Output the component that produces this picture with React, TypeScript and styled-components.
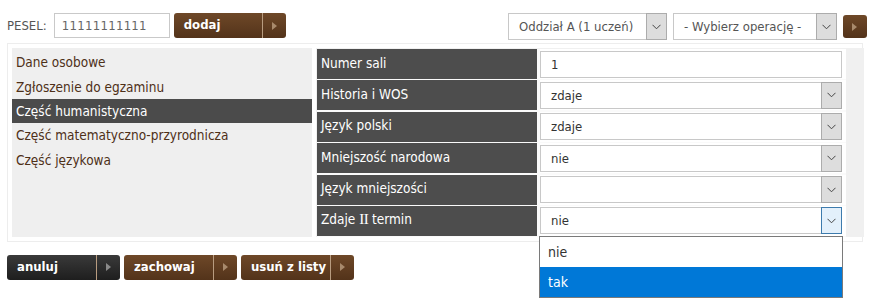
import React from 'react'
import styled, { createGlobalStyle, css } from 'styled-components'

const GlobalStyle = createGlobalStyle`
  html, body {
    margin: 0;
    padding: 0;
    background: #ffffff;
  }
  body {
    font-family: 'DejaVu Sans Condensed', 'DejaVu Sans', sans-serif;
    font-size: 13px;
    color: #444;
  }
`

const Page = styled.div`
  width: 881px;
  height: 300px;
  overflow: hidden;
  padding: 13px 14px 0 7px;
  box-sizing: border-box;
`

const TopBar = styled.div`
  display: flex;
  justify-content: space-between;
  align-items: flex-start;
  height: 30px;
`

const Group = styled.div<{ $gap?: number }>`
  display: flex;
  align-items: center;
  gap: ${p => p.$gap ?? 4}px;
`

const Label = styled.span`
  color: #555;
  font-size: 13px;
  margin-right: 3px;
`

const TextInput = styled.div<{ $width: number }>`
  width: ${p => p.$width}px;
  height: 25px;
  box-sizing: border-box;
  border: 1px solid #c9c9c9;
  background: #fff;
  color: #666;
  padding: 0 7px;
  display: flex;
  align-items: center;
  font-size: 13px;
  letter-spacing: 0.3px;
`

const btnColors = {
  brown: css`
    background: linear-gradient(#6e4828, #53331a);
  `,
  dark: css`
    background: linear-gradient(#3a3a3a, #1e1e1e);
  `,
}

const Btn = styled.div<{ $tone: 'brown' | 'dark'; $width: number; $height?: number }>`
  ${p => btnColors[p.$tone]}
  width: ${p => p.$width}px;
  height: ${p => p.$height ?? 25}px;
  border-radius: 3px;
  display: flex;
  align-items: stretch;
  color: #fff;
  font-weight: bold;
  font-size: 13px;
  box-sizing: border-box;
  cursor: pointer;
`

const BtnText = styled.span`
  flex: 1;
  display: flex;
  align-items: center;
  padding-left: 10px;
  padding-bottom: 2px;
`

const BtnArrow = styled.span<{ $solo?: boolean }>`
  width: 23px;
  display: flex;
  align-items: center;
  justify-content: center;
  border-left: ${p => (p.$solo ? 'none' : '1px solid #b89c80')};
`

const Arrow = ({ color = '#a88a6c' }: { color?: string }) => (
  <svg width="5" height="8" viewBox="0 0 5 8">
    <polygon points="0,0 5,4 0,8" fill={color} />
  </svg>
)

const Chevron = () => (
  <svg width="9" height="6" viewBox="0 0 9 6">
    <polyline points="0.5,0.8 4.5,4.8 8.5,0.8" fill="none" stroke="#444" strokeWidth="1" />
  </svg>
)

const SelectBox = styled.div<{ $width: number; $tone?: string }>`
  width: ${p => p.$width}px;
  height: 27px;
  box-sizing: border-box;
  border: 1px solid #c8c8c8;
  background: #fff;
  display: flex;
  align-items: stretch;
  color: ${p => p.$tone ?? '#333'};
  font-size: 13px;
`

const SelectText = styled.span`
  flex: 1;
  display: flex;
  align-items: center;
  padding-left: 10px;
  white-space: nowrap;
  overflow: hidden;
`

const SelectArrow = styled.span<{ $focused?: boolean }>`
  width: 21px;
  margin: -1px -1px -1px 0;
  box-sizing: border-box;
  display: flex;
  align-items: center;
  justify-content: center;
  background: ${p => (p.$focused ? '#e3f0fb' : '#dddddd')};
  border: 1px solid ${p => (p.$focused ? '#3d7bad' : '#acacac')};
`

const Panel = styled.div`
  width: 856px;
  box-sizing: border-box;
  border: 1px solid #ededed;
  padding: 4px;
  display: grid;
  grid-template-columns: 300px 1fr;
  column-gap: 4px;
`

const Sidebar = styled.div`
  background: #efefef;
  padding-top: 2px;
`

const NavItem = styled.div<{ $active?: boolean }>`
  height: 24.4px;
  display: flex;
  align-items: center;
  padding-left: 4px;
  color: ${p => (p.$active ? '#ffffff' : '#4e3018')};
  background: ${p => (p.$active ? '#4b4b4b' : 'transparent')};
  font-size: 13.5px;
`

const FormArea = styled.div`
  background: #f0f0f0;
  padding: 1px 18px 0 1px;
`

const FormGrid = styled.div`
  display: grid;
  grid-template-columns: 220px 306px;
  grid-auto-rows: 30px;
  row-gap: 1.4px;
  column-gap: 3px;
  background: #fafafa;
  padding-bottom: 1px;
`

const FieldLabel = styled.div`
  background: #4d4d4d;
  color: #fff;
  display: flex;
  align-items: center;
  padding-left: 4px;
  padding-bottom: 3px;
  font-size: 13.5px;
  white-space: pre;
`

const Roman = styled.span`
  font-family: 'Liberation Serif', serif;
  font-size: 15px;
  letter-spacing: -0.5px;
`

const FieldValue = styled.div`
  background: #fff;
  display: flex;
  align-items: center;
  position: relative;
`

const DropList = styled.div`
  position: absolute;
  left: -1px;
  top: 30px;
  width: 304px;
  box-sizing: border-box;
  border: 1px solid #7a7a7a;
  background: #fff;
  z-index: 2;
`

const DropOption = styled.div<{ $selected?: boolean }>`
  height: 30px;
  display: flex;
  align-items: center;
  padding-left: 8px;
  font-size: 14px;
  color: ${p => (p.$selected ? '#fff' : '#333')};
  background: ${p => (p.$selected ? '#0078d7' : '#fff')};
`

const Actions = styled.div`
  display: flex;
  gap: 4px;
  margin-top: 13px;
`

type Field = { label: React.ReactNode; key: string; value: string; kind: 'input' | 'select'; open?: boolean }

const fields: Field[] = [
  { key: 'sala', label: 'Numer sali', value: '1', kind: 'input' },
  { key: 'hist', label: 'Historia i WOS', value: 'zdaje', kind: 'select' },
  { key: 'pol', label: 'Język polski', value: 'zdaje', kind: 'select' },
  { key: 'mn', label: 'Mniejszość narodowa', value: 'nie', kind: 'select' },
  { key: 'jm', label: 'Język mniejszości', value: '', kind: 'select' },
  {
    key: 'term',
    label: (
      <>
        Zdaje <Roman>II</Roman> termin
      </>
    ),
    value: 'nie',
    kind: 'select',
    open: true,
  },
]

const navItems = [
  'Dane osobowe',
  'Zgłoszenie do egzaminu',
  'Część humanistyczna',
  'Część matematyczno-przyrodnicza',
  'Część językowa',
]

export default function App() {
  return (
    <>
      <GlobalStyle />
      <Page>
        <TopBar>
          <Group>
            <Label>PESEL:</Label>
            <TextInput $width={116}>11111111111</TextInput>
            <Btn $tone="brown" $width={112}>
              <BtnText>dodaj</BtnText>
              <BtnArrow>
                <Arrow />
              </BtnArrow>
            </Btn>
          </Group>
          <Group $gap={6}>
            <SelectBox $width={159} $tone="#555">
              <SelectText>Oddział A (1 uczeń)</SelectText>
              <SelectArrow>
                <Chevron />
              </SelectArrow>
            </SelectBox>
            <SelectBox $width={164} $tone="#555">
              <SelectText>- Wybierz operację -</SelectText>
              <SelectArrow>
                <Chevron />
              </SelectArrow>
            </SelectBox>
            <Btn $tone="brown" $width={24} $height={23}>
              <BtnArrow $solo>
                <Arrow />
              </BtnArrow>
            </Btn>
          </Group>
        </TopBar>

        <Panel>
          <Sidebar>
            {navItems.map((item, i) => (
              <NavItem key={item} $active={i === 2}>
                {item}
              </NavItem>
            ))}
          </Sidebar>
          <FormArea>
            <FormGrid>
              {fields.map(f => (
                <React.Fragment key={f.key}>
                  <FieldLabel>{f.label}</FieldLabel>
                  <FieldValue>
                    <SelectBox $width={302}>
                      <SelectText>{f.value}</SelectText>
                      {f.kind === 'select' && (
                        <SelectArrow $focused={f.open}>
                          <Chevron />
                        </SelectArrow>
                      )}
                    </SelectBox>
                    {f.open && (
                      <DropList>
                        <DropOption>nie</DropOption>
                        <DropOption $selected>tak</DropOption>
                      </DropList>
                    )}
                  </FieldValue>
                </React.Fragment>
              ))}
            </FormGrid>
          </FormArea>
        </Panel>

        <Actions>
          <Btn $tone="dark" $width={113}>
            <BtnText>anuluj</BtnText>
            <BtnArrow>
              <Arrow color="#8a8a8a" />
            </BtnArrow>
          </Btn>
          <Btn $tone="brown" $width={113}>
            <BtnText>zachowaj</BtnText>
            <BtnArrow>
              <Arrow />
            </BtnArrow>
          </Btn>
          <Btn $tone="brown" $width={113}>
            <BtnText>usuń z listy</BtnText>
            <BtnArrow>
              <Arrow />
            </BtnArrow>
          </Btn>
        </Actions>
      </Page>
    </>
  )
}
